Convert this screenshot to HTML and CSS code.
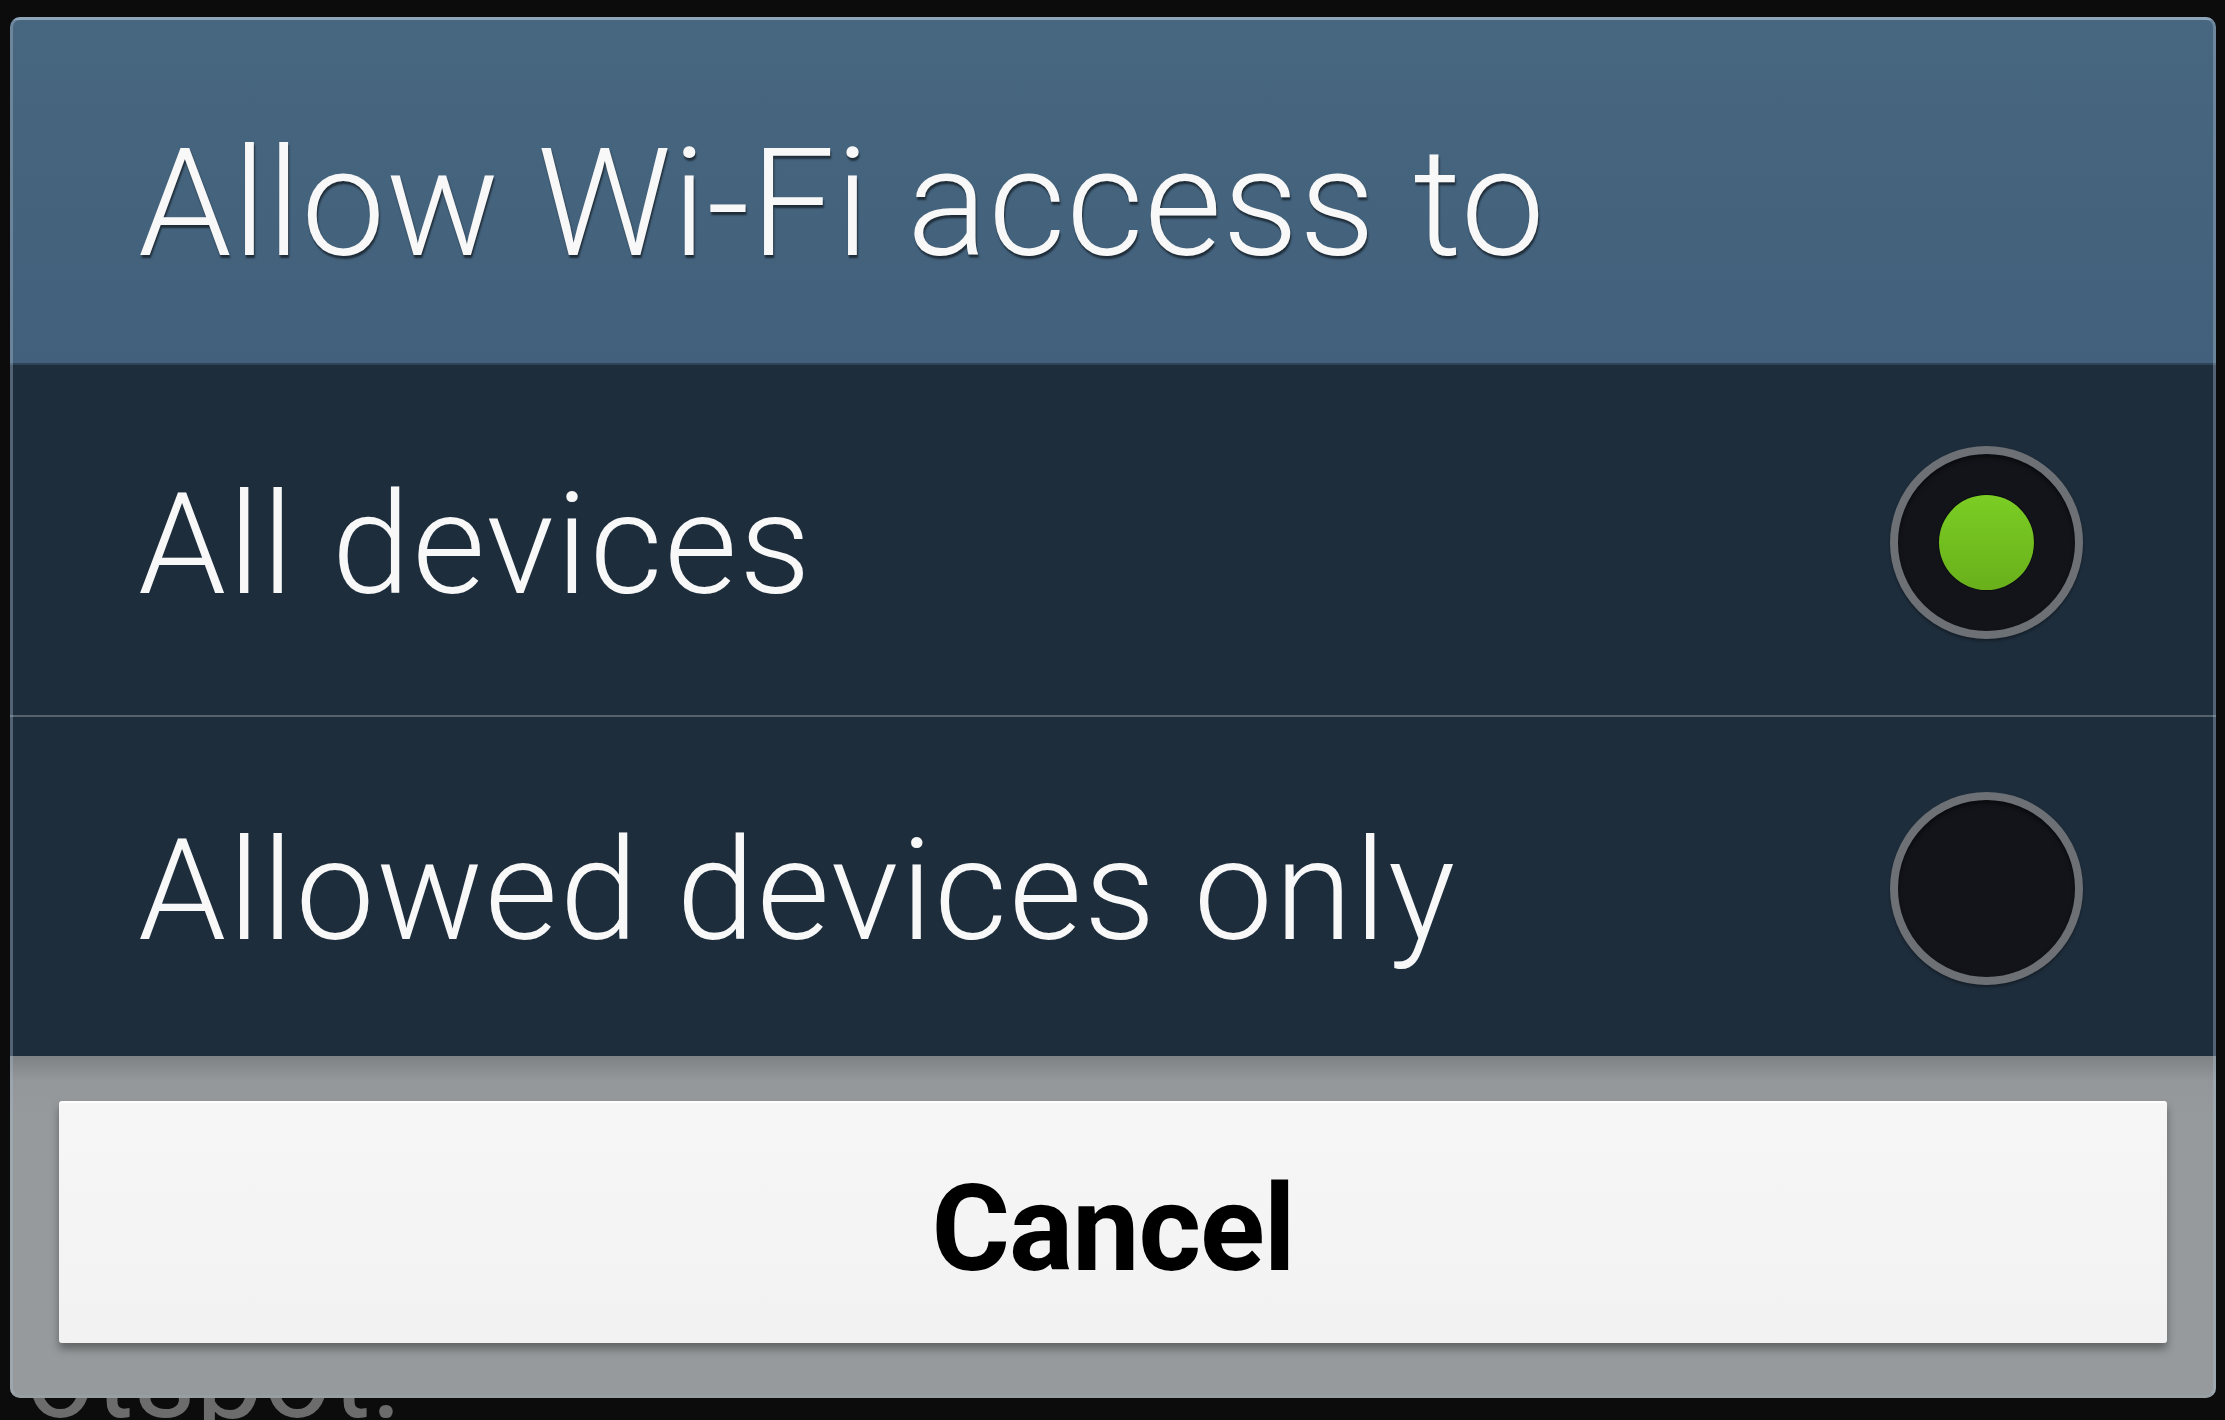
FILE: index.html
```html
<!DOCTYPE html>
<html lang="en">
<head>
<meta charset="utf-8">
<title>Allow Wi-Fi access to</title>
<link rel="stylesheet" href="styles.css">
</head>
<body>
<div class="screen">
  <div class="behind-text">otspot.</div>
  <div class="dialog">
    <div class="header">
      <h1 class="title">Allow Wi-Fi access to</h1>
    </div>
    <div class="list">
      <div class="item item-first">
        <span class="label">All devices</span>
        <span class="radio"><span class="dot"></span></span>
      </div>
      <div class="item item-second">
        <span class="label">Allowed devices only</span>
        <span class="radio"></span>
      </div>
    </div>
    <div class="footer">
      <button class="btn">Cancel</button>
    </div>
  </div>
</div>
</body>
</html>
```

FILE: styles.css
```css
* { box-sizing: border-box; }

html, body {
  margin: 0;
  padding: 0;
  background: #0c0c0c;
}

body {
  width: 2225px;
  height: 1420px;
  overflow: hidden;
  font-family: Roboto, "Liberation Sans", Arial, sans-serif;
}

.screen {
  position: relative;
  height: 1420px;
  padding: 17px 9px 0 10px;
}

.behind-text {
  position: absolute;
  left: 26px;
  top: 1316px;
  z-index: 0;
  font-size: 120px;
  line-height: 1;
  color: #6c6c6c;
  white-space: nowrap;
}

.dialog {
  position: relative;
  z-index: 1;
  height: 1381px;
  border-radius: 10px;
  overflow: hidden;
  display: flex;
  flex-direction: column;
  background: #1e2d3c;
}

.dialog::after {
  content: "";
  position: absolute;
  inset: 0;
  border-radius: 10px;
  border: 3px solid rgba(170, 188, 205, 0.38);
  border-bottom-color: rgba(170, 188, 205, 0.15);
  pointer-events: none;
}

.header {
  height: 348px;
  flex: none;
  display: flex;
  align-items: center;
  padding: 24px 0 0 128px;
  background: linear-gradient(#47667f, #42607b);
  border-top: 3px solid #7f98ae;
  border-bottom: 2px solid #2f4358;
}

.title {
  margin: 0;
  font-size: 150px;
  font-weight: 300;
  letter-spacing: 0.7px;
  line-height: 1;
  color: #f8f8f8;
  text-shadow: 1px 3px 2px rgba(0, 0, 0, 0.55);
  white-space: nowrap;
}

.list {
  flex: none;
  background: #1e2d3c;
}

.item {
  display: flex;
  align-items: center;
  justify-content: space-between;
  padding: 0 133px 0 128px;
}

.item-first {
  height: 350px;
  padding-top: 8px;
}

.item-second {
  height: 341px;
  padding-top: 8px;
  border-top: 2px solid #56636f;
}

.label {
  font-size: 141px;
  font-weight: 300;
  letter-spacing: 2px;
  line-height: 1;
  color: #f8f8f8;
  white-space: nowrap;
}

.radio {
  width: 193px;
  height: 193px;
  flex: none;
  border-radius: 50%;
  border: 8px solid #6d7074;
  background: #121419;
  box-shadow: 0 2px 3px rgba(0, 0, 0, 0.35), inset 0 3px 4px rgba(0, 0, 0, 0.5);
  display: flex;
  align-items: center;
  justify-content: center;
  margin-top: -4px;
}

.dot {
  width: 95px;
  height: 95px;
  border-radius: 50%;
  background: linear-gradient(#7bcd24, #69b01b);
  box-shadow: 0 0 0 1px rgba(0, 0, 0, 0.35);
}

.footer {
  flex: 1;
  padding: 45px 49px 0;
  background: linear-gradient(#7e8284 0, #93979a 24px, #969a9c 60px, #969a9c 100%);
}

.btn {
  display: block;
  width: 100%;
  height: 242px;
  margin: 0;
  padding: 12px 0 0;
  border: 0;
  border-top: 2px solid #ffffff;
  border-radius: 3px;
  background: linear-gradient(#f6f6f6, #f2f2f2);
  box-shadow: 0 6px 8px rgba(0, 0, 0, 0.35);
  font-family: Roboto, "Liberation Sans", Arial, sans-serif;
  font-size: 120px;
  font-weight: 700;
  letter-spacing: -1px;
  color: #000;
  line-height: 1;
}
```
